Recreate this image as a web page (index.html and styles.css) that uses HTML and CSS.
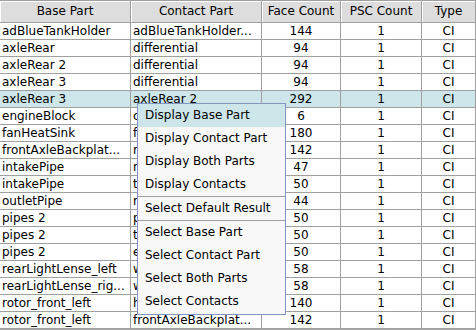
FILE: index.html
```html
<!DOCTYPE html>
<html>
<head>
<meta name="viewport" content="width=device-width, initial-scale=1">
<link rel="stylesheet" href="styles.css">
</head>
<body>

<div class="results">
  <div class="grid">
    <div class="head">Base Part</div>
    <div class="head">Contact Part</div>
    <div class="head">Face Count</div>
    <div class="head">PSC Count</div>
    <div class="head">Type</div>

    <div class="cell">adBlueTankHolder</div><div class="cell">adBlueTankHolder...</div><div class="cell num">144</div><div class="cell num">1</div><div class="cell num">CI</div>
    <div class="cell">axleRear</div><div class="cell">differential</div><div class="cell num">94</div><div class="cell num">1</div><div class="cell num">CI</div>
    <div class="cell">axleRear 2</div><div class="cell">differential</div><div class="cell num">94</div><div class="cell num">1</div><div class="cell num">CI</div>
    <div class="cell">axleRear 3</div><div class="cell">differential</div><div class="cell num">94</div><div class="cell num">1</div><div class="cell num">CI</div>
    <div class="cell sel">axleRear 3</div><div class="cell sel">axleRear 2</div><div class="cell num sel">292</div><div class="cell num sel">1</div><div class="cell num sel">CI</div>
    <div class="cell">engineBlock</div><div class="cell">crankshaft</div><div class="cell num">6</div><div class="cell num">1</div><div class="cell num">CI</div>
    <div class="cell">fanHeatSink</div><div class="cell">fanBlade</div><div class="cell num">180</div><div class="cell num">1</div><div class="cell num">CI</div>
    <div class="cell">frontAxleBackplat...</div><div class="cell">rotor_front_left</div><div class="cell num">142</div><div class="cell num">1</div><div class="cell num">CI</div>
    <div class="cell">intakePipe</div><div class="cell">radiator</div><div class="cell num">47</div><div class="cell num">1</div><div class="cell num">CI</div>
    <div class="cell">intakePipe</div><div class="cell">throttleBody</div><div class="cell num">50</div><div class="cell num">1</div><div class="cell num">CI</div>
    <div class="cell">outletPipe</div><div class="cell">radiator</div><div class="cell num">44</div><div class="cell num">1</div><div class="cell num">CI</div>
    <div class="cell">pipes 2</div><div class="cell">pipes 1</div><div class="cell num">50</div><div class="cell num">1</div><div class="cell num">CI</div>
    <div class="cell">pipes 2</div><div class="cell">tank</div><div class="cell num">50</div><div class="cell num">1</div><div class="cell num">CI</div>
    <div class="cell">pipes 2</div><div class="cell">engineBlock</div><div class="cell num">50</div><div class="cell num">1</div><div class="cell num">CI</div>
    <div class="cell">rearLightLense_left</div><div class="cell">wheelRear</div><div class="cell num">58</div><div class="cell num">1</div><div class="cell num">CI</div>
    <div class="cell">rearLightLense_rig...</div><div class="cell">wheelRear</div><div class="cell num">58</div><div class="cell num">1</div><div class="cell num">CI</div>
    <div class="cell">rotor_front_left</div><div class="cell">hub_front_left</div><div class="cell num">140</div><div class="cell num">1</div><div class="cell num">CI</div>
    <div class="cell">rotor_front_left</div><div class="cell">frontAxleBackplat...</div><div class="cell num">142</div><div class="cell num">1</div><div class="cell num">CI</div>
  </div>

  <ul class="menu">
    <li class="item active">Display Base Part</li>
    <li class="item">Display Contact Part</li>
    <li class="item">Display Both Parts</li>
    <li class="item">Display Contacts</li>
    <li class="sep"></li>
    <li class="item">Select Default Result</li>
    <li class="sep"></li>
    <li class="item">Select Base Part</li>
    <li class="item">Select Contact Part</li>
    <li class="item">Select Both Parts</li>
    <li class="item">Select Contacts</li>
  </ul>
</div>

</body>
</html>
```

FILE: styles.css
```css
* {
  box-sizing: border-box;
}

body {
  margin: 0;
  background: #a8a8a8;
  font-family: "DejaVu Sans", sans-serif;
  font-size: 12px;
  color: #000;
}

.results {
  position: relative;
  width: 476px;
  height: 330px;
  overflow: hidden;
  background: #fff;
}

.grid {
  display: grid;
  grid-template-columns: 131px 131px 79px 81px 54px;
  grid-auto-rows: 17px;
  grid-template-rows: 23px;
  border-bottom: 2px solid #a8a8a8;
}

.head {
  background: #dddddd;
  border-top: 1px solid #a0a0a0;
  border-right: 1px solid #a0a0a0;
  border-bottom: 1px solid #a0a0a0;
  box-shadow: inset 1px 1px 0 #fff;
  text-align: center;
  line-height: 21px;
  white-space: nowrap;
  overflow: hidden;
}

.cell {
  border-right: 1px solid #a0a0a0;
  border-bottom: 1px solid #a0a0a0;
  padding: 0 2px;
  line-height: 16px;
  white-space: nowrap;
  overflow: hidden;
}

.num {
  text-align: center;
}

.sel {
  background: #cde6ea;
}

.menu {
  position: absolute;
  left: 137px;
  top: 103px;
  width: 149px;
  list-style-type: none;
  margin: 0;
  padding: 0 0 1px 0;
  background: #f8f8f8;
  border: 1px solid #8197c2;
}

.menu .item {
  height: 23px;
  line-height: 23px;
  padding-left: 7px;
  white-space: nowrap;
}

.menu .active {
  background: #cde6ea;
}

.menu .sep {
  height: 1px;
  background: #a0a0a0;
}
```
